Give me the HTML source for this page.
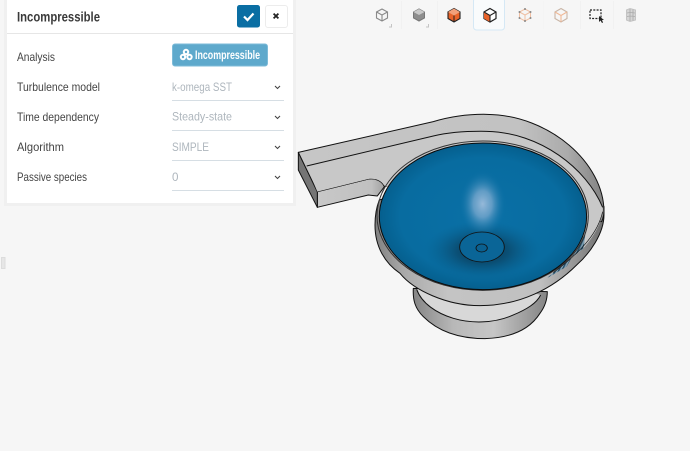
<!DOCTYPE html>
<html><head><meta charset="utf-8"><style>
html,body{margin:0;padding:0;background:#f6f6f6;width:690px;height:451px;overflow:hidden}
svg{position:absolute;left:0;top:0;display:block;filter:blur(.3px)}
text{font-family:"Liberation Sans",sans-serif}
.l{font-size:11.6px;fill:#444}
.v{font-size:11.6px;fill:#aeb6bd}
</style></head><body>
<svg width="690" height="451" viewBox="0 0 690 451" xmlns="http://www.w3.org/2000/svg">
<defs>
<linearGradient id="ped" x1="0" x2="1" y1="0" y2="0"><stop offset="0" stop-color="#858585"/><stop offset=".3" stop-color="#b8b8b8"/><stop offset=".6" stop-color="#c6c6c6"/><stop offset="1" stop-color="#848484"/></linearGradient>
<linearGradient id="ring" x1="0" x2="1" y1="0" y2="0"><stop offset="0" stop-color="#808080"/><stop offset=".12" stop-color="#a8a8a8"/><stop offset=".32" stop-color="#c4c4c4"/><stop offset=".72" stop-color="#c0c0c0"/><stop offset=".9" stop-color="#8e8e8e"/><stop offset="1" stop-color="#6e6e6e"/></linearGradient>
<linearGradient id="top" x1="0" x2="1" y1="0" y2="0"><stop offset="0" stop-color="#c6c6c6"/><stop offset=".72" stop-color="#c2c2c2"/><stop offset=".88" stop-color="#ababab"/><stop offset="1" stop-color="#828282"/></linearGradient>
<linearGradient id="front" x1="0" x2="1" y1="0" y2="0"><stop offset="0" stop-color="#c8c8c8"/><stop offset=".8" stop-color="#c0c0c0"/><stop offset="1" stop-color="#a0a0a0"/></linearGradient>
<radialGradient id="bowl" cx=".5" cy=".5" r=".5"><stop offset="0" stop-color="#0a70a6"/><stop offset=".8" stop-color="#086ca0"/><stop offset="1" stop-color="#055f8e"/></radialGradient>
<radialGradient id="dark"><stop offset="0" stop-color="#0b2c40" stop-opacity=".95"/><stop offset=".45" stop-color="#0b3d5a" stop-opacity=".6"/><stop offset="1" stop-color="#085f8e" stop-opacity="0"/></radialGradient>
<radialGradient id="hl"><stop offset="0" stop-color="#96b9d9"/><stop offset=".4" stop-color="#7eabd0" stop-opacity=".75"/><stop offset="1" stop-color="#0a70a6" stop-opacity="0"/></radialGradient>
<pattern id="hatch" width="9" height="9" patternUnits="userSpaceOnUse" patternTransform="rotate(25)"><rect width="9" height="9" fill="#7f9fb2"/><rect width="4" height="9" fill="#1d4a66"/></pattern>
</defs>
<rect width="690" height="451" fill="#f6f6f6"/>

<g transform="translate(290 100) scale(.3333)" stroke="#111" stroke-width="3" stroke-linejoin="round">
<!-- pedestal -->
<path d="M370,565 C368,600 375,625 400,650 C450,700 520,716 585,716 C650,714 715,695 750,640 C765,620 772,600 772,575 Z" fill="url(#ped)"/>
<path d="M380,568 C395,610 440,640 490,655 C540,670 610,672 670,645 C710,628 740,610 752,585 L700,570 L420,560 Z" fill="#d8d8d8" stroke="none"/>
<path d="M380,568 C395,610 440,640 490,655 C540,670 610,672 670,645 C710,628 740,610 752,585" fill="none"/>
<!-- lower ring -->
<path d="M255,375 C255,440 285,490 330,520 C370,570 470,617 570,617 C690,617 790,565 860,495 C900,460 942,400 942,345 L942,320 L600,200 L268,300 C260,320 255,350 255,375 Z" fill="url(#ring)"/>
<!-- spiral wall top + inlet -->
<path d="M82,275 L235,237 C258,234 275,243 285,258 L262,288 L235,285 L82,322 Z" fill="url(#front)"/>
<path d="M25,157 L82,275 L82,322 L25,210 Z" fill="#757575"/>
<path d="M25,157 L430,65 C480,50 530,42 590,43 C780,45 942,190 942,335 C942,345 938,358 935,365 L600,300 L282,258 C275,243 258,234 235,237 L82,275 Z" fill="url(#top)"/>
<path d="M50,198 L430,108 C480,96 530,93 590,94 C750,97 890,205 938,322 C942,345 925,395 880,445 L800,512 L600,400 L282,256 C275,243 258,234 235,237 L82,275 Z" fill="#c8c8c8" stroke="none"/>
<path d="M50,198 L430,108 C480,96 530,93 590,94 C750,97 890,205 938,322" fill="none"/>
<path d="M886,400 C885,420 882,435 880,445 L790,518 L770,535 L830,500 Z" fill="url(#hatch)" stroke="none"/>
<path d="M938,335 C925,395 880,450 790,518" fill="none" stroke-width="2"/>
<!-- bowl -->
<ellipse cx="578" cy="347" rx="317" ry="224" fill="none" stroke="#333" stroke-width="3"/>
<ellipse cx="579" cy="349" rx="311" ry="220" fill="url(#bowl)" stroke="#0a0a0a" stroke-width="3"/>
<g stroke="none">
<ellipse cx="578" cy="452" rx="175" ry="90" fill="url(#dark)"/>
<ellipse cx="578" cy="312" rx="70" ry="100" fill="url(#hl)"/>
</g>
<ellipse cx="576" cy="441" rx="67" ry="45" fill="#0a6597" stroke-width="2.5"/>
<ellipse cx="575" cy="444" rx="17" ry="12" fill="#0a6090" stroke-width="2.5"/>
</g>

<!-- panel -->
<rect x="4" y="-4" width="292" height="210" fill="#ececec" opacity=".6"/>
<rect x="7" y="-2" width="286" height="205" fill="#fff"/>
<rect x="7" y="33" width="286" height="1" fill="#e6e6e6"/>
<text x="17" y="21.5" font-size="13.5" font-weight="bold" fill="#3a3a3a" textLength="83" lengthAdjust="spacingAndGlyphs">Incompressible</text>
<rect x="237" y="5" width="23" height="22.5" rx="2.5" fill="#0a6ea3"/>
<path d="M244,16.5 L247.5,20 L253.5,13.5" fill="none" stroke="#fff" stroke-width="2.2"/>
<rect x="265.5" y="5.5" width="22" height="22" rx="2.5" fill="#fff" stroke="#ececec"/>
<path d="M273.6,13.6 L278.4,18.4 M278.4,13.6 L273.6,18.4" stroke="#222" stroke-width="1.8"/>

<text class="l" x="17" y="61" textLength="38" lengthAdjust="spacingAndGlyphs">Analysis</text>
<text class="l" x="17" y="91" textLength="83" lengthAdjust="spacingAndGlyphs">Turbulence model</text>
<text class="l" x="17" y="121" textLength="82" lengthAdjust="spacingAndGlyphs">Time dependency</text>
<text class="l" x="17" y="151" textLength="47" lengthAdjust="spacingAndGlyphs">Algorithm</text>
<text class="l" x="17" y="181" textLength="70" lengthAdjust="spacingAndGlyphs">Passive species</text>

<rect x="172.5" y="44" width="95" height="22" rx="2.5" fill="#5ea9cc" stroke="#7dbbd8"/>
<g fill="#fff"><circle cx="186" cy="52" r="3.2"/><circle cx="183" cy="57" r="3.2"/><circle cx="189.5" cy="57" r="3.2"/></g>
<g fill="#5ea9cc"><circle cx="186" cy="52" r="1.2"/><circle cx="183" cy="57" r="1.2"/><circle cx="189.5" cy="57" r="1.2"/></g>
<text x="195" y="59" font-size="11.5" font-weight="bold" fill="#fff" textLength="65" lengthAdjust="spacingAndGlyphs">Incompressible</text>

<text class="v" x="172" y="91" textLength="60" lengthAdjust="spacingAndGlyphs">k-omega SST</text>
<text class="v" x="172" y="120.5" textLength="60" lengthAdjust="spacingAndGlyphs">Steady-state</text>
<text class="v" x="172" y="151" textLength="37" lengthAdjust="spacingAndGlyphs">SIMPLE</text>
<text class="v" x="172" y="181">0</text>
<g fill="#d6dee4"><rect x="172" y="100" width="112" height="1"/><rect x="172" y="130" width="112" height="1"/><rect x="172" y="160" width="112" height="1"/><rect x="172" y="190" width="112" height="1"/></g>
<g fill="none" stroke="#444" stroke-width="1.1"><path d="M275,86 L277.5,88.5 L280,86"/><path d="M275,116 L277.5,118.5 L280,116"/><path d="M275,146 L277.5,148.5 L280,146"/><path d="M275,176 L277.5,178.5 L280,176"/></g>

<!-- left handle -->
<rect x="1.5" y="257.5" width="3.5" height="11" fill="#e6e6e6" stroke="#dcdcdc"/>

<!-- toolbar -->
<g fill="#f1f1f1"><rect x="401" y="1" width="1" height="28"/><rect x="437" y="1" width="1" height="28"/><rect x="580" y="1" width="1" height="28"/><rect x="613" y="1" width="1" height="28"/><rect x="543" y="1" width="1" height="28" opacity=".5"/></g>
<rect x="473.5" y="-2" width="31" height="32" rx="3" fill="#f9fbfc" stroke="#d5e8f5"/>

<!-- icon 1: wire -->
<g transform="translate(382 15)" fill="none" stroke="#8a8a8a" stroke-width="1.1"><path d="M0,-6 L5.5,-3 L5.5,3 L0,6 L-5.5,3 L-5.5,-3 Z"/><path d="M-5.5,-3 L0,0 L5.5,-3 M0,0 L0,6"/></g>
<path d="M389,27 L391.5,27 L391.5,24" fill="none" stroke="#c4c4c4"/>
<!-- icon 2: solid grey -->
<g transform="translate(419 15)"><path d="M0,-6 L5.5,-3 L5.5,3 L0,6 L-5.5,3 L-5.5,-3 Z" fill="#8e8e8e" stroke="#777"/><path d="M-5.5,-3 L0,-6 L5.5,-3 L0,0 Z" fill="#c9c9c9"/></g>
<path d="M426,27 L428.5,27 L428.5,24" fill="none" stroke="#c4c4c4"/>
<!-- icon 3 -->
<g transform="translate(454 15)"><path d="M0,-6.5 L6,-3 L6,3.5 L0,7 L-6,3.5 L-6,-3 Z" fill="#e8632a" stroke="#222" stroke-width="1.1"/><path d="M-6,-3 L0,-6.5 L6,-3 L0,.5 Z" fill="#f2a07a"/><path d="M0,.5 L0,7" stroke="#222"/></g>
<!-- icon 4 -->
<g transform="translate(490 15)"><path d="M0,-6.5 L6,-3 L6,3.5 L0,7 L-6,3.5 L-6,-3 Z" fill="#fff" stroke="#222" stroke-width="1.2"/><path d="M-6,-3 L0,.5 L0,7 L-6,3.5 Z" fill="#e8632a"/><path d="M-6,-3 L0,.5 L6,-3 M0,.5 L0,7" fill="none" stroke="#222" stroke-width="1.1"/></g>
<!-- icon 5 -->
<g transform="translate(525 15)"><path d="M0,-6 L5.5,-3 L5.5,3 L0,6 L-5.5,3 L-5.5,-3 Z M-5.5,-3 L0,0 L5.5,-3 M0,0 L0,6" fill="none" stroke="#f0c0a4" stroke-width="1"/><g fill="#888"><circle cx="0" cy="-6" r="1"/><circle cx="5.5" cy="-3" r="1"/><circle cx="5.5" cy="3" r="1"/><circle cx="0" cy="6" r="1"/><circle cx="-5.5" cy="3" r="1"/><circle cx="-5.5" cy="-3" r="1"/></g></g>
<!-- icon 6 -->
<g transform="translate(561 15)" fill="none" stroke-width="1.1"><path d="M0,-6.5 L6,-3 L6,3.5 L0,7 L-6,3.5 L-6,-3 Z" stroke="#c9b5a6"/><path d="M-6,-3 L0,.5 L6,-3 M0,.5 L0,7" stroke="#f0b896"/></g>
<!-- icon 7: selection -->
<rect x="590" y="10" width="11" height="8.5" fill="none" stroke="#222" stroke-width="1.2" stroke-dasharray="2 1.3"/>
<path d="M599,16 L599,22 L600.5,20.5 L602,23 L603,22.5 L602,20 L604,20 Z" fill="#222"/>
<!-- icon 8 -->
<g transform="translate(631 15)"><path d="M-4.5,-5 L-1,-6.5 L4.5,-5 L4.5,5 L-1,6.5 L-4.5,5 Z" fill="#d6d6d6" stroke="#c4c4c4"/><path d="M-1,-6 V6 M2,-5.5 V5.5 M-4,-2 L-1,-2.5 L4,-2 M-4,1.5 L-1,1 L4,1.5" fill="none" stroke="#aaa" stroke-width=".8"/></g>
</svg>
</body></html>
